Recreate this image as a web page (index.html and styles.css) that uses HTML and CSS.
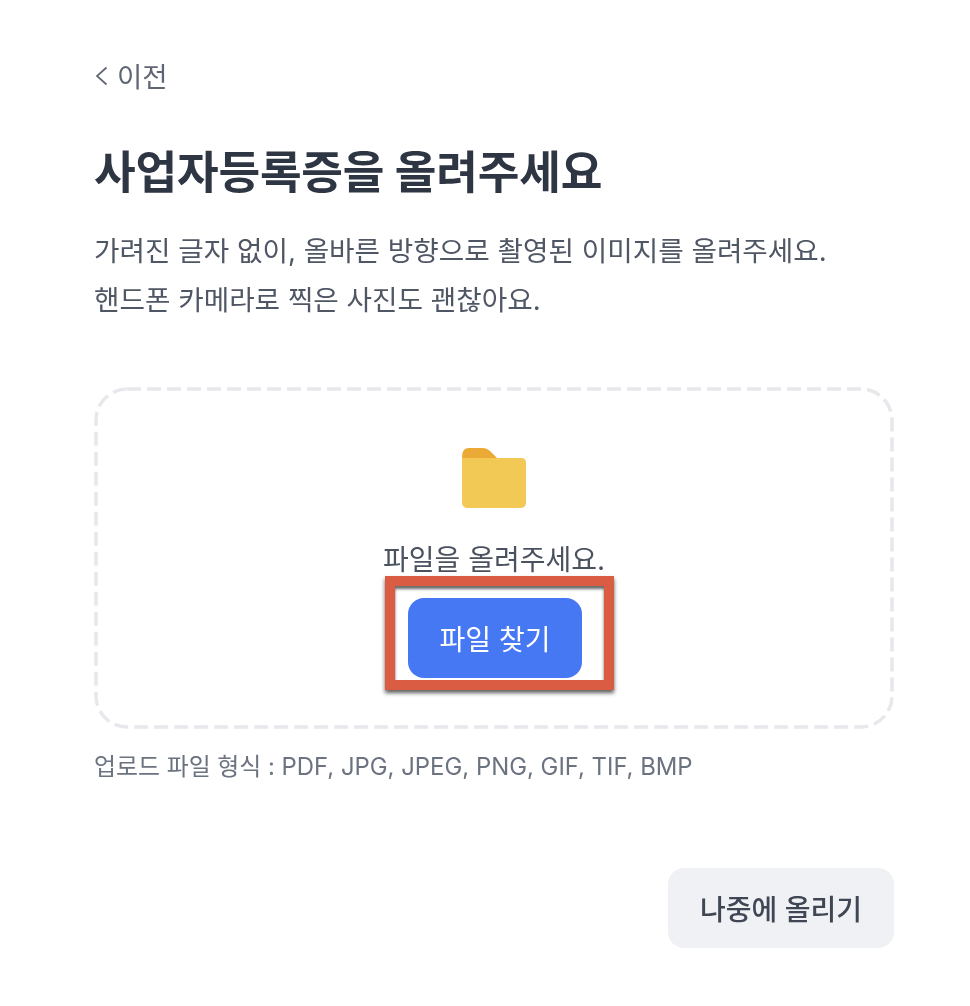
FILE: index.html
```html
<!DOCTYPE html>
<html lang="ko">
<head>
<meta charset="utf-8">
<title>사업자등록증 업로드</title>
<link rel="stylesheet" href="styles.css">
</head>
<body>
<main class="page">
  <a class="back" href="#">
    <svg class="back-icon" width="14" height="24" viewBox="0 0 14 24" fill="none"><path d="M12.5 3.5 L3 12 L12.5 20.5" stroke="#5f6673" stroke-width="1.7"/></svg>
    <span>이전</span>
  </a>
  <h1 class="title">사업자등록증을 올려주세요</h1>
  <p class="desc">가려진 글자 없이, 올바른 방향으로 촬영된 이미지를 올려주세요.<br>핸드폰 카메라로 찍은 사진도 괜찮아요.</p>
  <section class="drop">
    <svg class="folder" width="66" height="62" viewBox="0 0 66 62">
      <path d="M1 10 Q1 1 8 1 L22 1 Q26 1 29 4 L37 12 L1 14 Z" fill="#eba935"/>
      <path d="M1 11 L60 11 Q65 11 65 16 L65 55 Q65 61 59 61 L7 61 Q1 61 1 55 Z" fill="#f2c955"/>
    </svg>
    <p class="drop-text">파일을 올려주세요.</p>
    <div class="btn-wrap">
      <button class="btn-primary" type="button">파일 찾기</button>
      <span class="highlight"></span>
    </div>
  </section>
  <p class="formats">업로드 파일 형식 : PDF, JPG, JPEG, PNG, GIF, TIF, BMP</p>
  <div class="actions">
    <button class="btn-later" type="button">나중에 올리기</button>
  </div>
</main>
</body>
</html>
```
FILE: styles.css
```css
* { box-sizing: border-box; }
html, body { margin: 0; background: #fff; }
body {
  font-family: Inter, "Noto Sans CJK KR", "Liberation Sans", sans-serif;
  color: #2f3643;
}
.page {
  width: 970px;
  height: 1006px;
  padding: 58px 76px 0 94px;
  overflow: hidden;
  filter: blur(0.5px);
}
.back {
  display: flex;
  align-items: center;
  gap: 9px;
  height: 34px;
  color: #5f6673;
  font-size: 27.5px;
  text-decoration: none;
}
.back-icon { flex: none; margin-top: 1px; }
.title {
  margin: 51px 0 0;
  font-size: 45.3px;
  line-height: 60px;
  font-weight: 700;
  color: #2f3643;
  letter-spacing: -0.2px;
}
.desc {
  margin: 24px 0 0;
  font-size: 27.7px;
  line-height: 49px;
  color: #4f5664;
}
.drop {
  margin-top: 62px;
  height: 342px;
  border-radius: 32px;
  background-image: url("data:image/svg+xml,%3Csvg xmlns='http://www.w3.org/2000/svg' width='800' height='342'%3E%3Crect x='2' y='2' width='796' height='338' rx='31' fill='none' stroke='%23e6e8eb' stroke-width='3.5' stroke-dasharray='14 6'/%3E%3C/svg%3E");
  display: flex;
  flex-direction: column;
  align-items: center;
  padding-top: 60px;
}
.folder { display: block; }
.drop-text {
  margin: 31px 0 0;
  font-size: 28px;
  line-height: 40px;
  white-space: nowrap;
  color: #4a515f;
}
.btn-wrap { position: relative; margin: 18px 0 0 2px; }
.btn-primary {
  display: block;
  width: 174px;
  height: 80px;
  border: 0;
  border-radius: 16px;
  background: #4678f3;
  color: #fff;
  font: inherit;
  font-size: 28px;
  font-weight: 400;
}
.highlight {
  position: absolute;
  left: -23px;
  top: -22px;
  width: 229px;
  height: 114px;
  border: 10px solid #d95c43;
  box-shadow: 0 3px 4px rgba(40, 40, 40, 0.75), inset 0 3px 3px rgba(40, 40, 40, 0.7);
}
.formats {
  margin: 18px 0 0;
  font-size: 23.9px;
  line-height: 40px;
  color: #6b7280;
}
.actions {
  margin-top: 81px;
  display: flex;
  justify-content: flex-end;
}
.btn-later {
  width: 226px;
  height: 80px;
  border: 0;
  border-radius: 16px;
  background: #f0f1f4;
  color: #3f4654;
  font: inherit;
  font-size: 28px;
  font-weight: 500;
}
```
